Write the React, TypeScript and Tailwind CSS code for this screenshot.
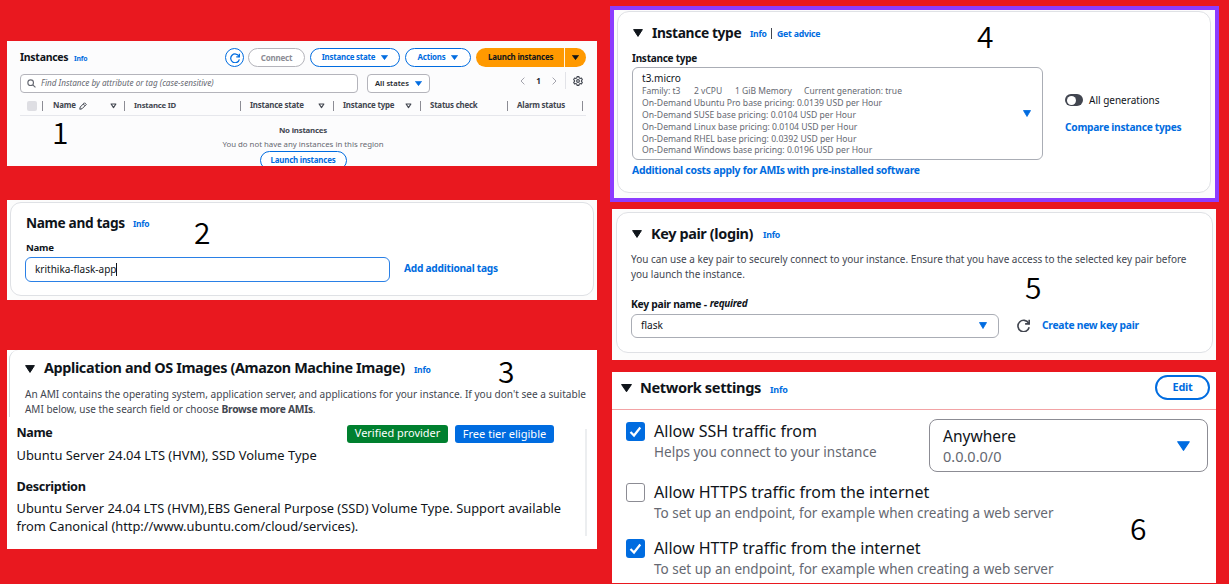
import React from "react";

type Box = { className?: string; children?: React.ReactNode };

const cx = (...c: (string | undefined)[]) => c.filter(Boolean).join(" ");

const strong = "font-bold tracking-[-0.026em]";

function Caret({ className }: { className?: string }) {
  return (
    <svg viewBox="0 0 10 8" preserveAspectRatio="none" className={cx("shrink-0", className)}>
      <path d="M0.6 0.6h8.8L5 7.4z" fill="currentColor" stroke="currentColor" strokeWidth="1" strokeLinejoin="round" />
    </svg>
  );
}

function SortCaret() {
  return (
    <svg viewBox="0 0 8 7" className="h-[6px] w-[7px] shrink-0">
      <path d="M1.2 1.2h5.6L4 5.4z" fill="none" stroke="#424650" strokeWidth="1.3" strokeLinejoin="round" />
    </svg>
  );
}

function Refresh({ className }: { className?: string }) {
  return (
    <svg viewBox="0 0 16 16" fill="none" stroke="currentColor" strokeWidth="2" className={cx("shrink-0", className)}>
      <path d="M15 1v5h-5" />
      <path d="M15 10.2A7 7 0 1 1 14.3 5.2L15 6" />
    </svg>
  );
}

function Link({ className, children }: Box) {
  return <a className={cx(strong, "text-[#006ce0]", className)}>{children}</a>;
}

function Heading({ className, children }: Box) {
  return <h2 className={cx(strong, "text-[#0f141a]", className)}>{children}</h2>;
}

function Mark({ className, children }: Box) {
  return (
    <span className={cx("absolute font-['Noto_Sans_CJK_SC','Noto_Sans',sans-serif] text-[30px] leading-[28px] font-[350] text-black", className)}>
      {children}
    </span>
  );
}

function PillButton({ className, children }: Box) {
  return (
    <button className={cx(strong, "flex h-[19px] shrink-0 items-center justify-center rounded-full border-[1.5px] border-[#006ce0] bg-white text-[7.9px] text-[#006ce0]", className)}>
      {children}
    </button>
  );
}

function Column({ className, children }: Box) {
  return <div className={cx("flex h-full shrink-0 items-center justify-between", className)}>{children}</div>;
}

function Bar() {
  return <span className="h-[10px] w-px shrink-0 bg-[#8c8c94]" />;
}

function InstancesPanel() {
  return (
    <section className="relative h-[125px] overflow-hidden bg-[#fcfcfd] pl-[13px] text-[#424650]">
      <div className="flex h-[33px] items-center">
        <Heading className="w-[54px] text-[10.5px]">Instances</Heading>
        <Link className="w-[151px] pt-[3px] text-[6.9px]">Info</Link>
        <button className="flex size-[19px] shrink-0 items-center justify-center rounded-full border-[1.5px] border-[#006ce0] bg-white text-[#006ce0]">
          <Refresh className="size-[10px]" />
        </button>
        <button className={cx(strong, "ml-[4px] flex h-[19px] w-[57px] shrink-0 items-center justify-center rounded-full border-[1.5px] border-[#b4b4bb] bg-white text-[8px] text-[#8c8c94]")}>
          Connect
        </button>
        <PillButton className="ml-[5px] w-[90px] gap-[6px]">
          Instance state
          <Caret className="h-[5px] w-[7px]" />
        </PillButton>
        <PillButton className="ml-[5px] w-[66px] gap-[6px]">
          Actions
          <Caret className="h-[5px] w-[7px]" />
        </PillButton>
        <button className={cx(strong, "ml-[5px] flex h-[19px] w-[110px] shrink-0 items-center overflow-hidden rounded-full bg-[#ff9900] text-[7.95px] text-[#0f141a]")}>
          <span className="flex h-full w-[89px] items-center border-r border-[#fff3e0] pl-[12px]">Launch instances</span>
          <Caret className="ml-[7px] h-[5px] w-[7px]" />
        </button>
      </div>

      <div className="flex h-[19px] items-center">
        <div className="flex h-[19px] w-[338px] shrink-0 items-center rounded-[4px] border border-[#b4b4bb] bg-white pl-[6px]">
          <svg viewBox="0 0 16 16" fill="none" stroke="#656871" strokeWidth="2" className="size-[9px]">
            <circle cx="6.5" cy="6.5" r="5" />
            <path d="m10.3 10.3 4.7 4.7" />
          </svg>
          <span className="pl-[5px] text-[8.17px] text-[#656871] italic">Find Instance by attribute or tag (case-sensitive)</span>
        </div>
        <div className="ml-[9px] flex h-[19px] w-[63px] shrink-0 items-center gap-[6px] rounded-[4px] border border-[#b4b4bb] bg-white pl-[7px] text-[7.6px] font-semibold text-[#25282e]">
          All states
          <Caret className="h-[5px] w-[7px] text-[#006ce0]" />
        </div>
        <div className="mb-[6px] ml-[90px] flex h-[17px] items-center">
          <svg viewBox="0 0 5 8" fill="none" stroke="#a4a4ad" strokeWidth="1" className="h-[8px] w-[5px]">
            <path d="M4.4.6 1 4l3.400 3.400" />
          </svg>
          <span className="w-[27px] text-center text-[8px] font-bold text-[#25282e]">1</span>
          <svg viewBox="0 0 5 8" fill="none" stroke="#a4a4ad" strokeWidth="1" className="h-[8px] w-[5px]">
            <path d="M.6.6 4 4 .6 7.400" />
          </svg>
          <span className="ml-[8px] h-[17px] w-px bg-[#e2e3e8]" />
          <svg viewBox="0 0 16 16" fill="none" stroke="#424650" strokeWidth="1.800" strokeLinejoin="round" className="ml-[7px] size-[10px]">
            <path d="M6.500 1h3l.5 2 1.500.9 2-.6 1.500 2.600-1.500 1.400v1.400l1.500 1.400-1.500 2.600-2-.6-1.500.9-.5 2h-3l-.5-2-1.500-.9-2 .6L1 10.100l1.500-1.400V7.300L1 5.900l1.500-2.600 2 .6L6 3z" />
            <circle cx="8" cy="8" r="2.200" />
          </svg>
        </div>
      </div>

      <div className={cx(strong, "mt-[3px] mr-[11px] flex h-[20px] items-center border-b border-[#e6e7ec] pt-px text-[7.9px]")}>
        <span className="ml-[7px] size-[10px] shrink-0 rounded-[2px] bg-[#dedee3]" />
        <span className="w-[5px]" />
        <Bar />
        <Column className="w-[81px] pr-[7px] pl-[10px]">
          <span className="flex items-center gap-[3px]">
            Name
            <svg viewBox="0 0 16 16" fill="none" stroke="#424650" strokeWidth="2" strokeLinejoin="round" className="size-[8px]">
              <path d="M1.500 14.500 2.500 10 11 1.500 14.500 5 6 13.500zM8.500 4l3.500 3.500" />
            </svg>
          </span>
          <SortCaret />
        </Column>
        <Bar />
        <Column className="w-[115px] pl-[9px]">
          <span className="text-[7.75px]">Instance ID</span>
        </Column>
        <Bar />
        <Column className="w-[92px] pr-[8px] pl-[9px]">
          Instance state
          <SortCaret />
        </Column>
        <Bar />
        <Column className="w-[86px] pr-[8px] pl-[9px]">
          Instance type
          <SortCaret />
        </Column>
        <Bar />
        <Column className="w-[86px] pl-[9px]">Status check</Column>
        <Bar />
        <Column className="w-[74px] pl-[9px]">Alarm status</Column>
        <Bar />
      </div>

      <div className="flex flex-col items-center pt-[7px] pr-[11px]">
        <span className={cx(strong, "h-[14px] text-[7.85px] leading-[14px]")}>No instances</span>
        <span className="h-[15px] text-[7.82px] leading-[15px] text-[#656871]">You do not have any instances in this region</span>
        <PillButton className="-mt-px w-[87px]">Launch instances</PillButton>
      </div>
      <Mark className="top-[76px] left-[45px]">1</Mark>
    </section>
  );
}

function NamePanel() {
  return (
    <section className="relative mt-[34px] h-[100px] bg-[#fcfcfc] px-[3px] pt-[2px]">
      <div className="h-[94px] rounded-[11px] border border-[#dfe1e5] bg-white pl-[14px] text-[#0f141a]">
        <div className="flex h-[40px] items-center pl-[1px]">
          <Heading className="w-[107px] text-[13.7px]">Name and tags</Heading>
          <Link className="pt-[3px] text-[8.45px]">Info</Link>
        </div>
        <div className={cx(strong, "flex h-[9px] items-center pl-[1px] text-[9.65px]")}>Name</div>
        <div className="mt-[5px] flex h-[25px] items-center">
          <div className="flex h-[25px] w-[365px] items-center rounded-[6px] border-[1.5px] border-[#2a80e6] pb-[2px] pl-[9px] text-[10px]">
            krithika-flask-app
            <span className="mt-[2px] h-[13px] w-px bg-[#0f141a]" />
          </div>
          <Link className="mb-[3px] ml-[14px] text-[10.2px]">Add additional tags</Link>
        </div>
      </div>
      <Mark className="top-[17px] left-[187px]">2</Mark>
    </section>
  );
}

function ImagesPanel() {
  return (
    <section className="relative mt-[50px] h-[199px] bg-white text-[#0f141a]">
      <div className="ml-[2px] h-[67px] rounded-tl-[9px] border-l border-[#d5d8dd] pl-[15px]">
        <div className="flex h-[37px] items-center">
          <Caret className="h-[8px] w-[10px]" />
          <Heading className="ml-[9px] w-[370px] text-[14.4px]">Application and OS Images (Amazon Machine Image)</Heading>
          <Link className="pt-[4px] text-[8.6px]">Info</Link>
        </div>
        <p className="text-[10.08px] leading-[15px] text-[#424650]">
          An AMI contains the operating system, application server, and applications for your instance. If you don't see a suitable
          <br />
          <span className="text-[9.98px]">AMI below, use the search field or choose </span>
          <b className={cx(strong, "text-[10.25px]")}>Browse more AMIs</b>.
        </p>
      </div>
      <div className="flex pl-[9.5px]">
        <div className="w-[568px] text-[12.9px]">
          <div className="flex h-[33px] items-center">
            <span className={cx(strong, "w-[330.5px] text-[12.5px]")}>Name</span>
            <span className="flex h-[18px] w-[101px] items-center justify-center rounded-[3px] bg-[#00802f] text-[10.95px] text-white">
              Verified provider
            </span>
            <span className="ml-[7px] flex h-[18px] w-[99px] items-center justify-center rounded-[3px] bg-[#006ce0] text-[11.07px] text-white">
              Free tier eligible
            </span>
          </div>
          <div className="-mt-px h-[12px] leading-[12px]">Ubuntu Server 24.04 LTS (HVM), SSD Volume Type</div>
          <div className={cx(strong, "mt-[18px] h-[14px] text-[12.7px] leading-[14px]")}>Description</div>
          <div className="mt-[6px] h-[18px] text-[12.84px] leading-[18px]">
            Ubuntu Server 24.04 LTS (HVM),EBS General Purpose (SSD) Volume Type. Support available
          </div>
          <div className="h-[18px] text-[12.85px] leading-[18px]">from Canonical (http://www.ubuntu.com/cloud/services).</div>
        </div>
        <span className="mt-[12px] h-[107px] w-[2px] bg-[#eceef0]" />
      </div>
      <Mark className="top-[6px] left-[491px]">3</Mark>
    </section>
  );
}

const pricing: [string, string][] = [
  ["Ubuntu Pro", "0.0139"],
  ["SUSE", "0.0104"],
  ["Linux", "0.0104"],
  ["RHEL", "0.0392"],
  ["Windows", "0.0196"],
];

function InstanceTypePanel() {
  return (
    <section className="relative -mr-[3px] -ml-[2px] h-[196px] border-[4px] border-[#8c3cff] bg-[#fcfcfc] pt-px pr-[4px] pl-[3px] text-[#0f141a]">
      <div className="h-[182px] rounded-[12px] border border-[#dfe1e5] bg-white pl-[14px]">
        <div className="flex h-[41px] items-center">
          <Caret className="ml-[1px] h-[8px] w-[10px]" />
          <Heading className="ml-[9px] w-[98px] text-[13.75px]">Instance type</Heading>
          <Link className="w-[21px] pt-[3px] text-[8.6px]">Info</Link>
          <span className="mt-[2px] mr-[5px] h-[11px] w-px bg-[#424650]" />
          <Link className="pt-[3px] text-[8.73px]">Get advice</Link>
        </div>
        <div className={cx(strong, "flex h-[9px] items-center text-[10px]")}>Instance type</div>
        <div className="mt-[5px] flex">
          <div className="flex h-[93px] w-[411px] items-start justify-between rounded-[6px] border border-[#aaadb5] pt-[4px] pr-[11px] pl-[9px]">
            <div className="text-[8.64px] leading-[11.8px] text-[#656871]">
              <div className="h-[13px] text-[10.05px] leading-[12px] text-[#0f141a]">t3.micro</div>
              <div className="mb-[1.5px] flex text-[8.52px]">
                <span className="w-[52px]">Family: t3</span>
                <span className="w-[41px]">2 vCPU</span>
                <span className="w-[69px]">1 GiB Memory</span>
                <span>Current generation: true</span>
              </div>
              {pricing.map(([os, usd]) => (
                <div key={os}>
                  On-Demand {os} base pricing: {usd} USD per Hour
                </div>
              ))}
            </div>
            <Caret className="mb-[4px] h-[7px] w-[8px] self-center text-[#006ce0]" />
          </div>
          <div className="ml-[22px] pt-[25px]">
            <div className="flex h-[16px] items-center gap-[6px] text-[10px]">
              <span className="flex h-[12px] w-[18px] items-center rounded-full bg-[#424650] pl-[1.500px]">
                <span className="size-[9px] rounded-full bg-white" />
              </span>
              All generations
            </div>
            <Link className="mt-[11px] block h-[16px] text-[10.2px] leading-[16px]">Compare instance types</Link>
          </div>
        </div>
        <Link className="mt-[2px] block h-[16px] text-[10.4px] leading-[16px]">Additional costs apply for AMIs with pre-installed software</Link>
      </div>
      <Mark className="top-[11px] left-[363px]">4</Mark>
    </section>
  );
}

function KeyPairPanel() {
  return (
    <section className="relative mt-[7px] h-[151px] bg-[#fcfcfc] pt-[3px] pr-[3px] pl-[4px] text-[#0f141a]">
      <div className="h-[141px] rounded-[12px] border border-[#dfe1e5] bg-white pl-[14px]">
        <div className="flex h-[42px] items-center">
          <Caret className="ml-[1px] h-[8px] w-[10px]" />
          <Heading className="ml-[9px] w-[112px] text-[14.45px]">Key pair (login)</Heading>
          <Link className="pt-[3px] text-[8.8px]">Info</Link>
        </div>
        <p className="-mt-[3px] text-[9.98px] leading-[15px] text-[#424650]">
          You can use a key pair to securely connect to your instance. Ensure that you have access to the selected key pair before
          <br />
          you launch the instance.
        </p>
        <div className={cx(strong, "mt-[14px] flex h-[16px] items-center text-[10.35px]")}>
          Key pair name -<i className="pl-[3px] text-[9.95px]">required</i>
        </div>
        <div className="mt-[1px] flex h-[25px] items-center">
          <div className="flex h-[24px] w-[368px] items-center justify-between rounded-[6px] border border-[#aaadb5] pr-[11px] pl-[9px] text-[10.1px]">
            flask
            <Caret className="h-[7px] w-[8px] text-[#006ce0]" />
          </div>
          <Refresh className="ml-[18px] size-[13px] text-[#424650]" />
          <Link className="ml-[12px] text-[10.3px]">Create new key pair</Link>
        </div>
      </div>
      <Mark className="top-[63px] left-[413px]">5</Mark>
    </section>
  );
}

function Check({ on }: { on?: boolean }) {
  if (!on) return <span className="size-[19px] shrink-0 rounded-[3px] border-[1.5px] border-[#8c8c94] bg-white" />;
  return (
    <span className="flex size-[19px] shrink-0 items-center justify-center rounded-[3px] bg-[#006ce0]">
      <svg viewBox="0 0 19 19" fill="none" stroke="#fff" strokeWidth="2.200" className="size-[19px]">
        <path d="m4.500 10 3.500 3.500L14.300 5.500" />
      </svg>
    </span>
  );
}

function Rule({ on, label, note }: { on?: boolean; label: string; note: string }) {
  return (
    <div className="flex">
      <Check on={on} />
      <div className="pl-[9px] text-[16.05px] leading-[19px]">
        <div>{label}</div>
        <div className="mt-[2px] text-[13.53px] text-[#656871]">{note}</div>
      </div>
    </div>
  );
}

function NetworkPanel() {
  return (
    <section className="relative mt-[12px] h-[211px] bg-white text-[#0f141a]">
      <div className="flex h-[38px] items-center border-b border-[#f3a3a5] pr-[6px] pb-[6px] pl-[9px]">
        <Caret className="h-[8px] w-[11px]" />
        <Heading className="ml-[8px] w-[130px] text-[14.6px]">Network settings</Heading>
        <Link className="pt-[4px] text-[9px]">Info</Link>
        <button className={cx(strong, "mt-[-1px] ml-auto flex h-[25px] w-[55px] items-center justify-center rounded-full border-[2px] border-[#006ce0] text-[10.9px] text-[#006ce0]")}>
          Edit
        </button>
      </div>
      <div className="flex justify-between pr-[8px] pl-[14px]">
        <div className="pt-[12px]">
          <Rule on label="Allow SSH traffic from" note="Helps you connect to your instance" />
          <div className="h-[21px]" />
          <Rule label="Allow HTTPS traffic from the internet" note="To set up an endpoint, for example when creating a web server" />
          <div className="h-[16px]" />
          <Rule on label="Allow HTTP traffic from the internet" note="To set up an endpoint, for example when creating a web server" />
        </div>
        <div className="mt-[9px] -ml-[130px] flex h-[53px] w-[279px] items-center justify-between rounded-[8px] border border-[#8c8c94] pr-[17px] pl-[13px]">
          <div>
            <div className="h-[20px] text-[15.56px] leading-[20px]">Anywhere</div>
            <div className="h-[20px] text-[14.5px] leading-[20px] text-[#656871]">0.0.0.0/0</div>
          </div>
          <Caret className="h-[10px] w-[13px] text-[#006ce0]" />
        </div>
      </div>
      <Mark className="top-[141px] left-[518px]">6</Mark>
    </section>
  );
}

export default function App() {
  return (
    <main className="flex h-[584px] w-[1229px] overflow-hidden bg-[#e9181f] font-['Noto_Sans','Open_Sans',sans-serif] leading-none whitespace-nowrap">
      <div className="w-[597px] shrink-0 pt-[41px] pl-[7px]">
        <InstancesPanel />
        <NamePanel />
        <ImagesPanel />
      </div>
      <div className="ml-[15px] w-[604px] shrink-0 pt-[6px]">
        <InstanceTypePanel />
        <KeyPairPanel />
        <NetworkPanel />
      </div>
    </main>
  );
}
